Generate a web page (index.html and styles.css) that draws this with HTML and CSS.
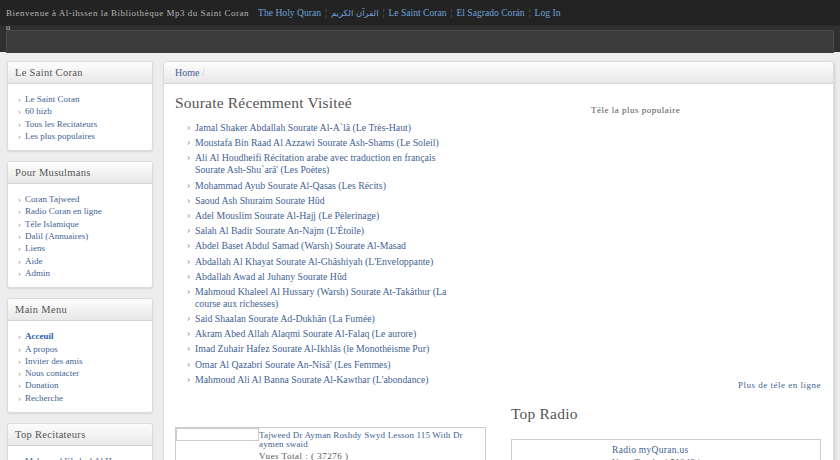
FILE: index.html
```html
<!DOCTYPE html>
<html lang="fr">
<head>
    <meta charset="UTF-8">
    <meta name="viewport" content="width=device-width, initial-scale=1.0">
    <title>Al-ihssen - Bibliothèque Mp3 du Saint Coran</title>
    <link rel="stylesheet" href="styles.css">
</head>
<body>
    <div class="topbar">
        <span class="welcome">Bienvenue à Al-ihssen la Bibliothèque Mp3 du Saint Coran</span>
        <nav class="toplinks">
            <a href="#">The Holy Quran</a><span class="sep">¦</span><a href="#" class="ar">القرآن الكريم</a><span class="sep">¦</span><a href="#">Le Saint Coran</a><span class="sep">¦</span><a href="#">El Sagrado Corán</a><span class="sep">¦</span><a href="#">Log In</a>
        </nav>
    </div>
    <div class="navbar">
        <span class="dot">o</span>
        <div class="navinner"></div>
    </div>

    <div class="page">
        <aside class="sidebar">
            <div class="box">
                <div class="box-head">Le Saint Coran</div>
                <ul class="menu">
                    <li><a href="#">Le Saint Coran</a></li>
                    <li><a href="#">60 hizb</a></li>
                    <li><a href="#">Tous les Recitateurs</a></li>
                    <li><a href="#">Les plus populaires</a></li>
                </ul>
            </div>
            <div class="box">
                <div class="box-head">Pour Musulmans</div>
                <ul class="menu">
                    <li><a href="#">Coran Tajweed</a></li>
                    <li><a href="#">Radio Coran en ligne</a></li>
                    <li><a href="#">Téle Islamique</a></li>
                    <li><a href="#">Dalil (Annuaires)</a></li>
                    <li><a href="#">Liens</a></li>
                    <li><a href="#">Aide</a></li>
                    <li><a href="#">Admin</a></li>
                </ul>
            </div>
            <div class="box">
                <div class="box-head">Main Menu</div>
                <ul class="menu">
                    <li><a href="#" class="current">Acceuil</a></li>
                    <li><a href="#">A propos</a></li>
                    <li><a href="#">Inviter des amis</a></li>
                    <li><a href="#">Nous contacter</a></li>
                    <li><a href="#">Donation</a></li>
                    <li><a href="#">Recherche</a></li>
                </ul>
            </div>
            <div class="box">
                <div class="box-head">Top Recitateurs</div>
                <ul class="menu">
                    <li><a href="#">Mahmoud Khaleel Al Hussary</a></li>
                    <li><a href="#">Abdel Baset Abdul Samad</a></li>
                </ul>
            </div>
        </aside>

        <main class="content">
            <div class="crumb"><a href="#">Home</a> <span class="slash">/</span></div>
            <div class="cols">
                <div class="col-left">
                    <h2>Sourate Récemment Visiteé</h2>
                    <ul class="recent">
                        <li><a href="#">Jamal Shaker Abdallah Sourate Al-A`lâ (Le Très-Haut)</a></li>
                        <li><a href="#">Moustafa Bin Raad Al Azzawi Sourate Ash-Shams (Le Soleil)</a></li>
                        <li><a href="#">Ali Al Houdheifi Récitation arabe avec traduction en français Sourate Ash-Shu`arâ' (Les Poètes)</a></li>
                        <li><a href="#">Mohammad Ayub Sourate Al-Qasas (Les Récits)</a></li>
                        <li><a href="#">Saoud Ash Shuraim Sourate Hûd</a></li>
                        <li><a href="#">Adel Mouslim Sourate Al-Hajj (Le Pèlerinage)</a></li>
                        <li><a href="#">Salah Al Badir Sourate An-Najm (L'Étoile)</a></li>
                        <li><a href="#">Abdel Baset Abdul Samad (Warsh) Sourate Al-Masad</a></li>
                        <li><a href="#">Abdallah Al Khayat Sourate Al-Ghâshiyah (L'Enveloppante)</a></li>
                        <li><a href="#">Abdallah Awad al Juhany Sourate Hûd</a></li>
                        <li><a href="#">Mahmoud Khaleel Al Hussary (Warsh) Sourate At-Takâthur (La course aux richesses)</a></li>
                        <li><a href="#">Said Shaalan Sourate Ad-Dukhân (La Fumée)</a></li>
                        <li><a href="#">Akram Abed Allah Alaqmi Sourate Al-Falaq (Le aurore)</a></li>
                        <li><a href="#">Imad Zuhair Hafez Sourate Al-Ikhlâs (le Monothéisme Pur)</a></li>
                        <li><a href="#">Omar Al Qazabri Sourate An-Nisâ' (Les Femmes)</a></li>
                        <li><a href="#">Mahmoud Ali Al Banna Sourate Al-Kawthar (L'abondance)</a></li>
                    </ul>

                    <table class="lesson">
                        <tr>
                            <td class="thumb"><div class="thumb-img"></div></td>
                            <td class="info">
                                <a href="#">Tajweed Dr Ayman Roshdy Swyd Lesson 115 With Dr aymen swaid</a>
                                <div class="views">Vues Total : ( 37276 )</div>
                            </td>
                        </tr>
                    </table>
                </div>

                <div class="col-right">
                    <div class="tv">
                        <p class="tv-title">Téle la plus populaire</p>
                    </div>
                    <p class="more"><a href="#">Plus de téle en ligne</a></p>
                    <h2>Top Radio</h2>
                    <div class="radio">
                        <a href="#">Radio myQuran.us</a>
                        <div class="views">Vues Total : ( 51248 )</div>
                    </div>
                </div>
            </div>
        </main>
    </div>
</body>
</html>
```

FILE: styles.css
```css
body {
    margin: 0;
    background: #ededed;
    font-family: "Liberation Serif", "DejaVu Serif", serif;
    font-size: 10px;
    color: #555;
    overflow: hidden;
}
a {
    color: #3f5f94;
    text-decoration: none;
}

/* top strip */
.topbar {
    display: flex;
    align-items: center;
    height: 25px;
    padding-left: 6px;
    background: #232323;
    white-space: nowrap;
}
.welcome {
    color: #b4b4b4;
    font-size: 9px;
    letter-spacing: 0.52px;
}
.toplinks {
    margin-left: 9px;
    font-size: 9.6px;
}
.toplinks a {
    color: #6fa0d6;
}
.toplinks .ar {
    font-family: "DejaVu Sans", sans-serif;
    font-size: 8.5px;
}
.sep {
    margin: 0 4px;
    color: #6b6b6b;
}

.navbar {
    position: relative;
    height: 27px;
    padding: 4px 6px 0;
    box-sizing: border-box;
    background: #303030;
    border-top: 1px solid #2a2a2a;
}
.navinner {
    height: 23px;
    box-sizing: border-box;
    background: #3b3b3b;
    border: 1px solid #4a4a4a;
    border-bottom: 0;
    border-radius: 3px 3px 0 0;
}
.dot {
    position: absolute;
    left: 6px;
    top: -3px;
    font-size: 8px;
    color: #c8c8c8;
}

/* layout */
.page {
    display: flex;
    align-items: flex-start;
    gap: 10px;
    padding: 9px 6px 0 7px;
}
.sidebar {
    display: flex;
    flex-direction: column;
    gap: 10px;
    width: 146px;
    flex: none;
}
.box {
    background: #fff;
    border: 1px solid #dcdcdc;
    border-radius: 3px;
    box-shadow: 0 1px 2px rgba(0, 0, 0, 0.1);
}
.box-head {
    height: 21px;
    line-height: 21px;
    padding-left: 7px;
    background: linear-gradient(#fdfdfd, #e8e8e8);
    border-bottom: 1px solid #d3d3d3;
    border-radius: 3px 3px 0 0;
    font-size: 10.5px;
    letter-spacing: 0.3px;
    color: #555;
}
.menu {
    list-style: none;
    margin: 0;
    padding: 9px 0 8px 10px;
}
.menu li {
    font-size: 9px;
    line-height: 12.3px;
}
.menu li::before {
    content: "›";
    margin-right: 4px;
    color: #888;
}
.menu .current {
    color: #2a5cae;
    font-weight: bold;
}

/* main panel */
.content {
    flex: 1;
    height: 420px;
    background: #fff;
    border: 1px solid #dcdcdc;
    border-radius: 3px;
    box-shadow: 1px 1px 3px rgba(0, 0, 0, 0.12);
}
.crumb {
    height: 21px;
    line-height: 21px;
    padding-left: 11px;
    background: linear-gradient(#fdfdfd, #e8e8e8);
    border-bottom: 1px solid #d3d3d3;
    border-radius: 3px 3px 0 0;
    font-size: 10px;
}
.crumb .slash {
    color: #bbb;
}
.cols {
    display: flex;
    gap: 26px;
    padding: 0 11px;
}
.col-left,
.col-right {
    width: 310px;
}
h2 {
    margin: 9px 0 0;
    font-size: 15.5px;
    line-height: 20px;
    font-weight: normal;
    color: #555;
    letter-spacing: 0.2px;
}

.recent {
    list-style: none;
    margin: 9px 0 0;
    padding: 0 20px 0 12px;
}
.recent li {
    position: relative;
    padding-left: 8px;
    margin-bottom: 3.2px;
    font-size: 9.8px;
    line-height: 12px;
}
.recent li::before {
    content: "›";
    position: absolute;
    left: 0;
    top: -1px;
    color: #888;
}

.lesson {
    width: 311px;
    margin-top: 41px;
    border: 1px solid #ccc;
    border-collapse: separate;
    border-spacing: 0;
}
.lesson td {
    padding: 0;
    vertical-align: top;
}
.thumb {
    width: 83px;
}
.thumb-img {
    height: 11px;
    border: 1px solid #ccc;
}
.lesson .info {
    padding: 3px 10px 0 0;
    font-size: 9px;
    line-height: 9.5px;
    letter-spacing: 0.15px;
}
.views {
    margin-top: 1px;
    font-size: 9px;
    line-height: 11px;
    letter-spacing: 0.5px;
    color: #555;
}

/* right column */
.tv {
    height: 275px;
    padding-top: 20px;
}
.tv-title {
    margin: 0 0 0 80px;
    font-size: 9px;
    line-height: 12px;
    letter-spacing: 0.5px;
    color: #555;
}
.more {
    margin: 0;
    text-align: right;
    font-size: 9px;
    line-height: 12px;
    letter-spacing: 0.5px;
}
.more a {
    color: #3f5f94;
}
.col-right h2 {
    margin-top: 13px;
}
.radio {
    margin-top: 15px;
    padding: 4px 0 0 100px;
    border: 1px solid #ccc;
    height: 30px;
    font-size: 9.5px;
    line-height: 12px;
    letter-spacing: 0.3px;
}
```
